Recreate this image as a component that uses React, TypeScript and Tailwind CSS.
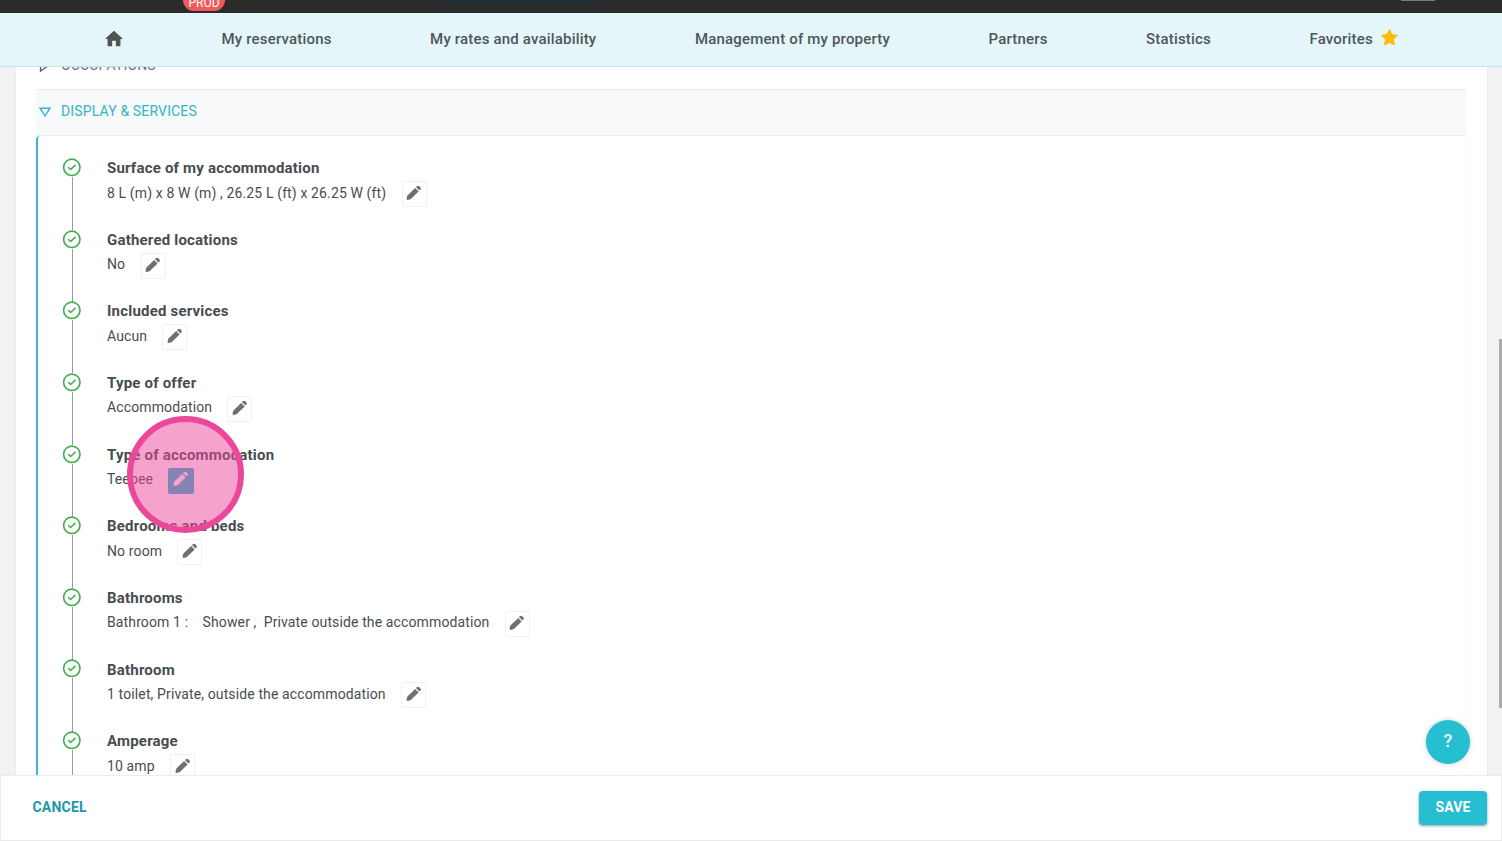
import React from 'react';

const navItems = ['My reservations', 'My rates and availability', 'Management of my property', 'Partners', 'Statistics'];

const services = [
  { title: 'Surface of my accommodation', value: '8 L (m) x 8 W (m) , 26.25 L (ft) x 26.25 W (ft)' },
  { title: 'Gathered locations', value: 'No' },
  { title: 'Included services', value: 'Aucun' },
  { title: 'Type of offer', value: 'Accommodation' },
  { title: 'Type of accommodation', value: 'Teepee', active: true },
  { title: 'Bedrooms and beds', value: 'No room' },
  { title: 'Bathrooms', value: 'Bathroom 1 :\u00a0\u00a0\u00a0 Shower ,\u00a0 Private outside the accommodation' },
  { title: 'Bathroom', value: '1 toilet, Private, outside the accommodation' },
  { title: 'Amperage', value: '10 amp' },
];

const HomeIcon = () => (
  <svg viewBox="0 0 24 24" className="-mx-0.5 mb-0.5 h-[22px] w-[22px]" fill="#4f5455">
    <path d="M10 19v-5h4v5c0 .55.45 1 1 1h3c.55 0 1-.45 1-1v-7h1.7c.46 0 .68-.57.33-.87L12.67 3.6c-.38-.34-.96-.34-1.34 0l-8.36 7.53c-.34.3-.13.87.33.87H5v7c0 .55.45 1 1 1h3c.55 0 1-.45 1-1z" />
  </svg>
);

const StarIcon = () => (
  <svg viewBox="0 0 24 24" className="mb-1 h-[17px] w-[17px]" fill="#fcbd0b" stroke="#fcbd0b" strokeWidth="2" strokeLinejoin="round">
    <path d="M12 1.500l3.200 6.700 7.300 1-5.300 5.200 1.300 7.600L12 18.400l-6.500 3.600 1.300-7.600L1.500 9.200l7.300-1z" />
  </svg>
);

const CheckIcon = () => (
  <svg viewBox="0 0 20 20" className="h-5 w-5 shrink-0" fill="none" stroke="#40ad4c">
    <circle cx="9.800" cy="10.300" r="8.200" strokeWidth="1.600" />
    <path d="M6.200 10.200l2.400 2.300 4.900-4.600" strokeWidth="1.500" />
  </svg>
);

const PencilIcon = () => (
  <svg viewBox="0 0 16 16" className="h-4 w-4 shrink-0" fill="currentColor">
    <path d="M.7 14.800c-.3-1.400.3-3.800 1-4.600l7.400-7.300 3.500 3.500-7.500 7.400c-.9.800-3.200 1.300-4.400 1z" />
    <path d="M9.900 2.100l.9-.9c.7-.7 1.800-.7 2.500 0l1 1c.7.700.7 1.800 0 2.500l-.9.900z" />
  </svg>
);

const App: React.FC = () => {
  return (
    <div className="relative flex h-[841px] w-[1502px] flex-col overflow-hidden bg-[#f2f2f2] font-['Roboto',sans-serif] text-[#474c51]">
      {/* Top bar */}
      <div className="flex h-[13px] shrink-0 items-start overflow-hidden bg-[#2b2b2b]">
        <div className="ml-[183px] flex h-[11px] w-[42px] items-end justify-center rounded-b-full bg-[#f4595a] pb-px text-[12px] leading-[14px] text-white">
          PROD
        </div>
        <div className="ml-[217px] h-[2px] w-[154px] bg-[#14363c]" />
        <div className="ml-[805px] h-px w-[34px] bg-[#71807f]" />
      </div>

      {/* Main navigation */}
      <nav className="flex h-[54px] shrink-0 items-center justify-between border-b border-[#bfe5ec] bg-[#e4f6f9] pr-[104px] pl-[105px] text-[15px] font-medium text-[#505658]">
        <HomeIcon />
        {navItems.map(item => (
          <span key={item} className="tracking-[0.18px]">{item}</span>
        ))}
        <span className="flex items-center gap-2 tracking-[0.2px]">
          Favorites
          <StarIcon />
        </span>
      </nav>

      {/* Scrollable content */}
      <main className="flex h-[708px] shrink-0 overflow-hidden">
        <div className="ml-[15px] w-[1473px] border-x border-[#ececec] bg-white px-5">
          <div className="flex h-[22px] flex-col justify-end overflow-hidden">
            <div className="flex h-[33px] shrink-0 items-start text-[14px] text-[#6d7275]">
              <svg viewBox="0 0 12 12" className="mt-[4px] ml-[3px] h-3 w-3" fill="none" stroke="#555a5c" strokeWidth="1.300">
                <path d="M1.500 1v10l7.500-5z" />
              </svg>
              <span className="ml-2.5 leading-[18px] tracking-[0.15px]">OCCUPATIONS</span>
            </div>
          </div>
          <div className="flex h-[47px] w-[1430px] items-center border-y border-[#e8eaec] bg-[#f7f9fb] pb-[3px] text-[14px] text-[#35b5c5]">
            <svg viewBox="0 0 12 10" className="mt-0.5 ml-[3px] h-2.5 w-3" fill="none" stroke="#35b5c5" strokeWidth="1.400">
              <path d="M1 1.200h10L6 8.800z" />
            </svg>
            <span className="ml-2.5 leading-5 tracking-[0.15px]">DISPLAY &amp; SERVICES</span>
          </div>
          <div className="h-[700px] w-[1430px] rounded-tl border-r border-l-2 border-r-[#fafafa] border-l-[#3cb6c8] pt-[21px] pl-6">
            {services.map(({ title, value, active }) => (
              <div key={title} className="flex h-[71.65px]">
                <div className="flex w-5 flex-col items-center">
                  <CheckIcon />
                  <div className="-mb-[1.5px] ml-px w-px flex-1 bg-[#999]" />
                </div>
                <div className="ml-[25px] pt-[1.1px]">
                  <div className="text-[15px] leading-5 font-bold tracking-[0.2px] whitespace-nowrap">{title}</div>
                  <div className="mt-[2.9px] flex h-[26px] text-[14px]">
                    <span className="pt-[0.53px] leading-[23px] tracking-[0.125px] whitespace-nowrap">{value}</span>
                    <button
                      type="button"
                      className={
                        active
                          ? 'ml-[15.3px] flex h-[26px] w-[26px] justify-center rounded-xs bg-[#23bccf] pt-[3px] text-white'
                          : 'ml-[15.3px] flex h-[26px] w-[25px] justify-center rounded-xs border border-[#f1f1f1] pt-[3px] text-[#6c7073]'
                      }
                    >
                      <PencilIcon />
                    </button>
                  </div>
                </div>
              </div>
            ))}
          </div>
        </div>
        <div className="mt-[272px] ml-auto h-[369px] w-[3px] bg-[#a9abad]" />
      </main>

      {/* Footer */}
      <footer className="flex h-[66px] shrink-0 items-start justify-between border border-[#ebebeb] bg-white pt-[15px] pr-[14px] pl-[31.5px] text-[14px] font-bold">
        <button type="button" className="h-[34px] pb-0.5 tracking-[0.2px] text-[#1c98ab]">CANCEL</button>
        <button type="button" className="h-[34px] w-[68px] rounded bg-[#26bed1] pb-0.5 tracking-[0.15px] text-white shadow-[0_1px_3px_rgba(0,0,0,0.4)]">
          SAVE
        </button>
      </footer>

      {/* Click marker */}
      <div className="absolute top-[416px] left-[127px] h-[117px] w-[117px] rounded-full border-[6px] border-[#ec4899] bg-[#ec4899]/50" />

      <button
        type="button"
        className="absolute top-[720px] left-[1426px] h-11 w-11 rounded-full bg-[#26bed1] pb-[3px] text-[18px] font-medium text-[#effbfc] shadow-[0_0_5px_rgba(0,0,0,0.2)]"
      >
        ?
      </button>
    </div>
  );
};

export default App;
